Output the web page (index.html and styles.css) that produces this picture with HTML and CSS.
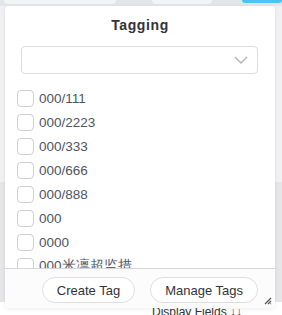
FILE: index.html
```html
<!DOCTYPE html>
<html lang="en">

<head>
  <meta charset="UTF-8">
  <meta name="viewport" content="width=device-width, initial-scale=1.0">
  <title>Tagging</title>
  <link rel="stylesheet" href="styles.css">
</head>

<body>
  <header class="toolbar">
    <span class="tool-btn tool-btn-a"></span>
    <span class="tool-btn tool-btn-b"></span>
    <span class="tool-btn tool-btn-blue"></span>
  </header>
  <main class="page">
    <div class="page-band"></div>
    <div class="page-foot">Display Fields ↓↓</div>
  </main>

  <section class="popup">
    <h2 class="popup-title">Tagging</h2>
    <div class="select">
      <svg class="select-arrow" width="14" height="8" viewBox="0 0 14 8">
        <path d="M1 1l6 6 6-6" fill="none" stroke="#b4b4bc" stroke-width="1.4" />
      </svg>
    </div>
    <ul class="tag-list">
      <li class="tag"><span class="check"></span>000/111</li>
      <li class="tag"><span class="check"></span>000/2223</li>
      <li class="tag"><span class="check"></span>000/333</li>
      <li class="tag"><span class="check"></span>000/666</li>
      <li class="tag"><span class="check"></span>000/888</li>
      <li class="tag"><span class="check"></span>000</li>
      <li class="tag"><span class="check"></span>0000</li>
      <li class="tag"><span class="check"></span>000米凛超监措</li>
    </ul>
    <footer class="popup-foot">
      <button class="pill">Create Tag</button>
      <button class="pill">Manage Tags</button>
      <svg class="grip" width="8" height="8" viewBox="0 0 8 8">
        <path d="M7 1L1 7M7 4L4 7M7 6.5L6.5 7" stroke="#555" stroke-width="1.2" />
      </svg>
    </footer>
  </section>
</body>

</html>
```

FILE: styles.css
```css
html {
  box-sizing: border-box;
  font-family: 'Liberation Sans', Arial, sans-serif;
  font-size: 13px;
}

*,
*:before,
*::after {
  box-sizing: inherit;
}

body {
  margin: 0;
  width: 282px;
  height: 315px;
  overflow: hidden;
  background-color: #f1f1f3;
}

.toolbar {
  display: flex;
  height: 6px;
  background-color: #e4e5ea;
}

.tool-btn {
  display: block;
  height: 4px;
  border-radius: 0 0 4px 4px;
}

.tool-btn-a {
  width: 112px;
  margin-left: 4px;
  background-color: #f3f4f6;
}

.tool-btn-b {
  width: 60px;
  margin-left: 36px;
  background-color: #f3f4f6;
}

.tool-btn-blue {
  width: 40px;
  margin-left: auto;
  height: 3px;
  background-color: #4cc3f3;
}

.page {
  display: flex;
  flex-direction: column;
  height: 309px;
}

.page-band {
  margin-top: 176px;
  height: 120px;
  background-color: #e6e6e8;
}

.page-foot {
  margin-top: auto;
  height: 13px;
  padding-left: 152px;
  background-color: #fff;
  color: #333;
  font-size: 12px;
  line-height: 20px;
}

.popup {
  position: absolute;
  left: 5px;
  top: 6px;
  width: 270px;
  height: 302px;
  display: flex;
  flex-direction: column;
  background-color: #fff;
  border-radius: 4px;
  box-shadow: 0 1px 4px rgba(0, 0, 0, 0.08);
  overflow: hidden;
}

.popup-title {
  margin: 11px 0 0;
  text-align: center;
  font-size: 14px;
  font-weight: bold;
  letter-spacing: 0.6px;
  color: #33333a;
  line-height: 16px;
}

.select {
  display: flex;
  align-items: center;
  justify-content: flex-end;
  margin: 13px 17px 0 16px;
  height: 28px;
  padding-right: 9px;
  border: 1px solid #dcdce0;
  border-radius: 4px;
}

.tag-list {
  flex: 1;
  margin: 12px 0 0;
  padding: 0 0 0 12px;
  list-style: none;
  overflow: hidden;
}

.tag {
  display: flex;
  align-items: center;
  gap: 5px;
  height: 24px;
  color: #4f5565;
  font-size: 13.5px;
}

.check {
  width: 17px;
  height: 17px;
  border: 1px solid #cfd0d4;
  border-radius: 4px;
}

.popup-foot {
  position: relative;
  display: flex;
  justify-content: flex-end;
  gap: 15px;
  height: 40px;
  padding: 8px 17px 0 0;
  border-top: 1px solid #d6d6d8;
  background-color: #fcfcfc;
}

.pill {
  height: 26px;
  padding: 0 14px;
  border: 1px solid #dedee2;
  border-radius: 13px;
  background-color: #fff;
  font-family: inherit;
  font-size: 13px;
  color: #33333a;
}

.grip {
  position: absolute;
  right: 3px;
  bottom: 3px;
}
```
